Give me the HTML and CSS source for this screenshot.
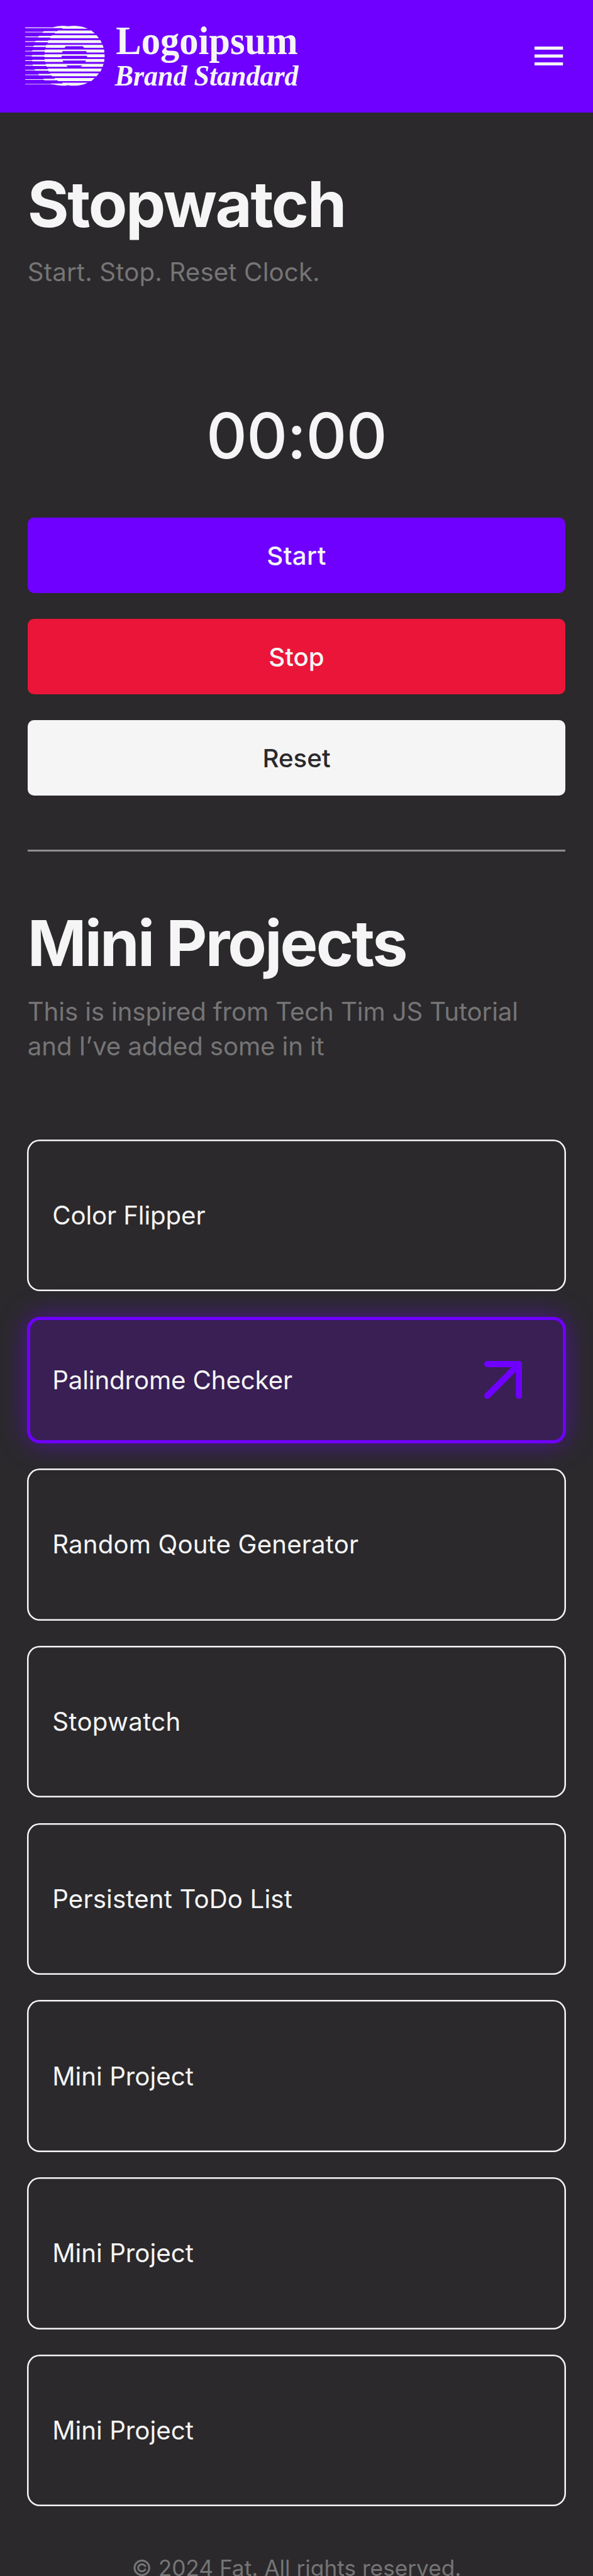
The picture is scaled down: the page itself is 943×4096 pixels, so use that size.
FILE: index.html
```html
<!DOCTYPE html>
<html lang="en">
<head>
<meta charset="utf-8">
<title>Stopwatch</title>
<link rel="stylesheet" href="styles.css">
</head>
<body>
<header class="header">
  <div class="brand">
    <svg class="brand-mark" viewBox="24 57 453 342" fill="currentColor" aria-hidden="true">
      <path d="M24 66H180Q205 58 235 57Q255 57 268 60Q285 57 305 57Q346 58 381 74H233L239 70H24Z"/>
      <path d="M24 91H123L133 87H205L212 84H400L421 101H190L195 97H125L122 95H24Z"/>
      <path d="M24 118H98L104 114H172L178 111H430L444 128H165L168 124H100L97 122H24Z"/>
      <path d="M24 145H80L86 142H154L158 138H452L460 155H152L153 151H82L79 149H24Z"/>
      <path d="M24 172H70L76 169H143L145 165H465L470 182H360L352 173H255L248 182H141L142 178H72L69 176H24Z"/>
      <path d="M24 199H63L68 196H136L137 192H473L475 209H374L371 201H237L234 209H135V204H64L62 203H24Z"/>
      <path d="M24 226H61L66 223H134V219H476V236H376V228H231V236H134V232H63L60 230H24Z"/>
      <path d="M24 253H63L66 250H135V246H475L473 263H366L370 255H237L241 263H138L137 259H66L63 257H24Z"/>
      <path d="M24 280H64L68 277H142L141 273H470L465 290H338L350 282H257L268 290H146L145 286H72L68 284H24Z"/>
      <path d="M24 307H80L75 304H153L152 300H460L453 317H158L156 313H84L80 311H24Z"/>
      <path d="M24 334H102L97 331H168L165 327H444L430 344H178L174 340H104L101 338H24Z"/>
      <path d="M24 361H131L123 358H195L190 354H420L400 372H212L206 367H135L130 365H24Z"/>
      <path d="M24 388H175L168 385H238L232 381H381Q346 398 305 398Q285 398 268 395Q253 398 235 398Q207 397 183 391H24Z"/>
    </svg>
    <svg class="brand-name" viewBox="0 0 360 130" fill="currentColor">
      <text class="brand-title" x="4" y="60.5" textLength="345" lengthAdjust="spacingAndGlyphs">Logoipsum</text>
      <text class="brand-tag" x="2" y="121" textLength="348" lengthAdjust="spacingAndGlyphs">Brand Standard</text>
    </svg>
  </div>
  <svg class="menu" viewBox="0 0 54 36" fill="currentColor" role="img" aria-label="Menu">
    <rect width="54" height="6"/><rect y="15" width="54" height="6"/><rect y="30" width="54" height="6"/>
  </svg>
</header>
<main class="page">
  <section class="stopwatch">
    <h1 class="title title-stopwatch">Stopwatch</h1>
    <p class="lead wide">Start. Stop. Reset Clock.</p>
    <div class="time">00:00</div>
    <div class="actions">
      <button class="button start">Start</button>
      <button class="button stop">Stop</button>
      <button class="button reset">Reset</button>
    </div>
  </section>
  <hr class="divider">
  <section class="projects">
    <h2 class="title title-projects">Mini Projects</h2>
    <p class="lead tight">This is inspired from Tech Tim JS Tutorial<br>and I’ve added some in it</p>
    <div class="cards">
      <a class="card tight">Color Flipper</a>
      <a class="card active tight">Palindrome Checker
        <svg class="arrow" viewBox="0 0 72 72" fill="none" stroke="currentColor" stroke-width="12" stroke-linecap="round" stroke-linejoin="round" aria-hidden="true"><path d="M6 6H66V66M66 6L6 66"/></svg>
      </a>
      <a class="card wide">Random Qoute Generator</a>
      <a class="card wider">Stopwatch</a>
      <a class="card wide">Persistent ToDo List</a>
      <a class="card">Mini Project</a>
      <a class="card">Mini Project</a>
      <a class="card">Mini Project</a>
    </div>
  </section>
</main>
<footer class="footer">© 2024 Fat. All rights reserved.</footer>
</body>
</html>
```
FILE: styles.css
```css
* { box-sizing: border-box; }

html {
  font-size: 83.866px;
  overflow: hidden;
  background: #2b292c;
}

body {
  margin: 0;
  height: 4096px;
  overflow: hidden;
  font-family: Inter, "Liberation Sans", sans-serif;
  color: #f5f5f5;
}

.header {
  display: flex;
  align-items: flex-start;
  justify-content: space-between;
  height: 2.13rem;
  padding: .42rem .565rem 0 .48rem;
  background: #6f00ff;
}

.brand { display: flex; align-items: flex-start; }
.brand-mark { width: 1.51rem; height: 1.14rem; margin-top: .07rem; }
.brand-name { width: 3.6rem; height: 1.3rem; margin-left: .17rem; overflow: visible; }
.brand-title { font: 700 76px "Liberation Serif", serif; }
.brand-tag { font: italic 700 55px "Liberation Serif", serif; }
.menu { width: .54rem; height: .36rem; margin-top: .465rem; }

.page { width: 10.2rem; margin: 0 auto; }

.title {
  margin: 0;
  font-size: 1.2rem;
  font-weight: 700;
  line-height: 1.2rem;
  white-space: nowrap;
}
.title-stopwatch { letter-spacing: -.029rem; }
.title-projects { letter-spacing: -.034rem; }

.lead {
  margin: .355rem 0 0;
  font-size: .48rem;
  font-weight: 400;
  line-height: .66rem;
  color: #757575;
  white-space: nowrap;
}

.tight { letter-spacing: -.0017rem; }
.wide { letter-spacing: .0015rem; }
.wider { letter-spacing: .0035rem; }

.stopwatch { padding: 1.15rem 0 1.02rem; }

.time {
  margin-top: 2.17rem;
  font-size: 1.2rem;
  font-weight: 500;
  line-height: 1.2rem;
  letter-spacing: -.0075rem;
  text-align: center;
}

.actions {
  display: grid;
  gap: .48rem;
  margin-top: .945rem;
}

.button {
  height: 1.44rem;
  padding: 0;
  border: 0;
  border-radius: .12rem;
  font: 500 .48rem Inter, sans-serif;
  color: #f5f5f5;
}
.start { background: #6f00ff; letter-spacing: .004rem; }
.stop { background: #ea1538; }
.reset { background: #f5f5f5; color: #2b292c; }

.divider {
  height: .03rem;
  margin: 0;
  border: 0;
  background: #8f8f8f;
}

.projects { padding-top: 1.154rem; }

.cards {
  display: grid;
  gap: .48rem;
  margin: 1.435rem -.015rem 0;
}

.card {
  display: flex;
  align-items: center;
  justify-content: space-between;
  height: 2.88rem;
  padding: 0 .485rem;
  border-radius: .24rem;
  font-size: .48rem;
  font-weight: 400;
  box-shadow: inset 0 0 0 .03rem #f5f5f5;
}

.card.active {
  height: 2.4rem;
  padding: 0 .78rem 0 .425rem;
  border: .06rem solid #6f00ff;
  background: #391f54;
  box-shadow: 0 0 .48rem rgba(111, 0, 255, .5);
}

.arrow { width: .72rem; height: .72rem; color: #6f00ff; }

.footer {
  margin-top: .86rem;
  font-size: .42rem;
  font-weight: 400;
  line-height: .6rem;
  text-align: center;
  color: #757575;
}
```
